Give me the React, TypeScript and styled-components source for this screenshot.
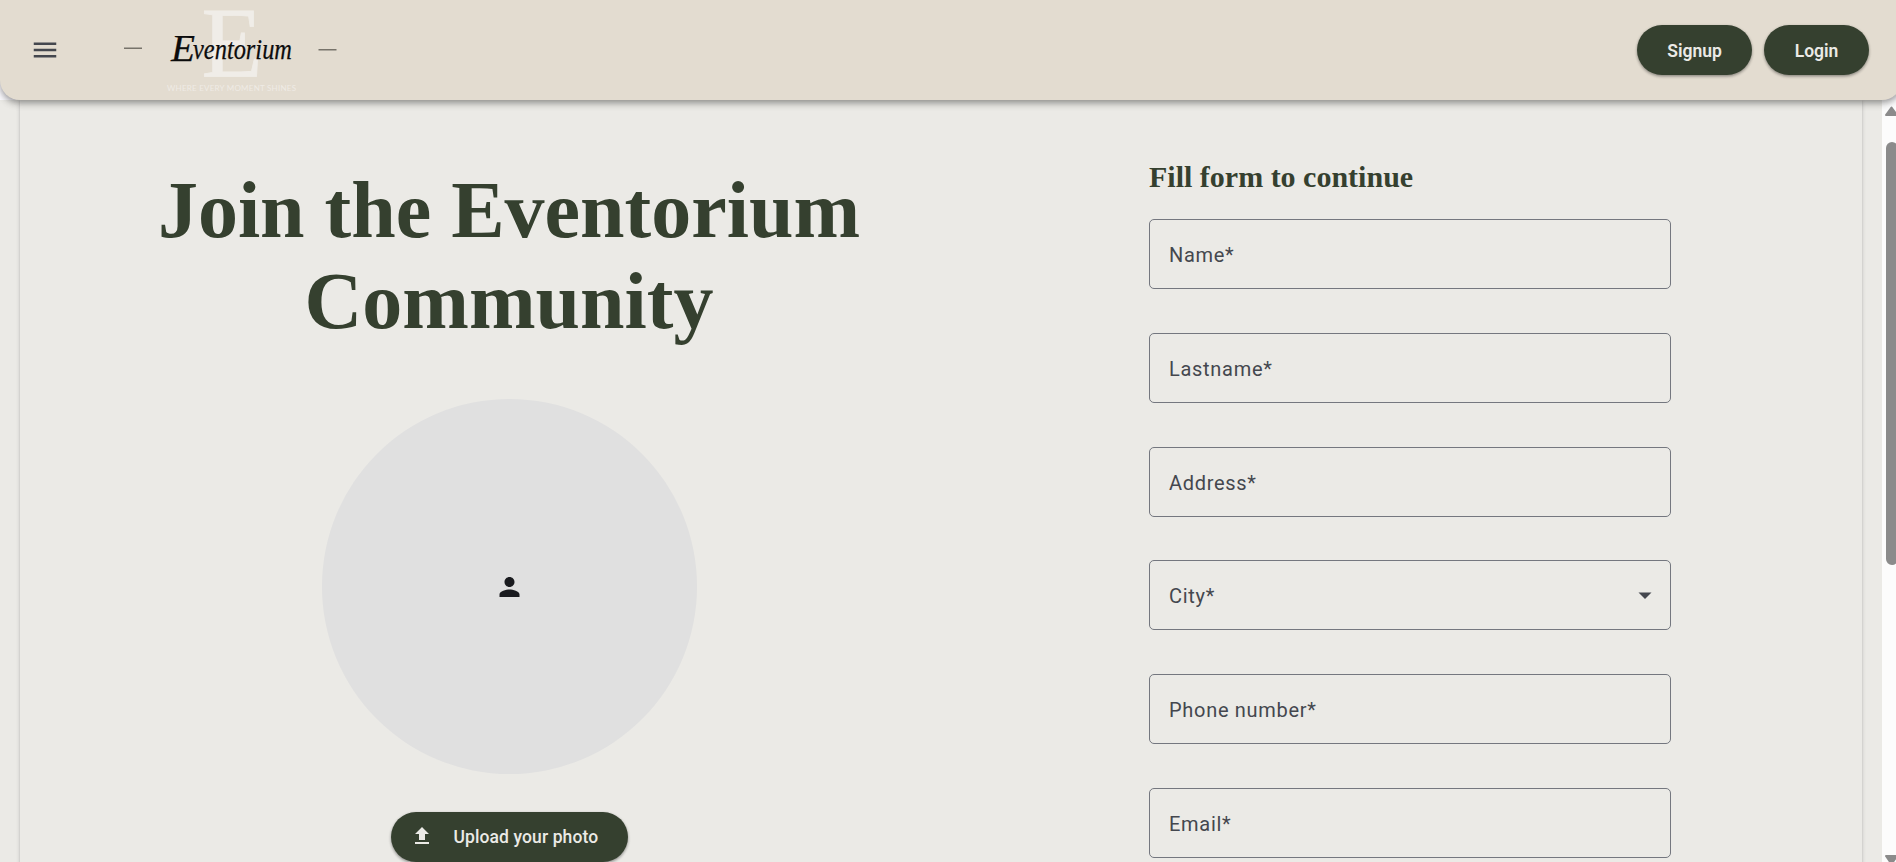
import React from "react";
import styled, { createGlobalStyle } from "styled-components";

const green = "#35402f";
const cream = "#e3dcd0";
const paper = "#ebeae6";

const GlobalStyle = createGlobalStyle`
  * { box-sizing: border-box; }
  html, body { margin: 0; height: 862px; overflow: hidden; background: #faf9fd; }
`;

const Page = styled.div`
  display: flex;
  flex-direction: column;
  height: 862px;
  overflow: hidden;
  font-family: Roboto, "Liberation Sans", sans-serif;
`;

const Header = styled.header`
  position: relative;
  z-index: 2;
  flex: none;
  display: flex;
  align-items: center;
  width: 1902px;
  height: 100px;
  padding: 0 33px 0 30px;
  background: ${cream};
  border-radius: 0 0 20px 20px;
  box-shadow: 0 2.5px 5px -1px rgba(0, 0, 0, 0.2), 0 5px 6px rgba(0, 0, 0, 0.14),
    0 1px 12px rgba(0, 0, 0, 0.12);
`;

const MenuButton = styled.button`
  display: flex;
  width: 30px;
  height: 30px;
  padding: 0;
  border: 0;
  background: none;
  color: #44474e;
`;

const Logo = styled.svg`
  margin-left: 60px;
  width: 220px;
  height: 100px;
  overflow: visible;
`;

const Actions = styled.nav`
  display: flex;
  gap: 12px;
  margin-left: auto;
`;

const PillButton = styled.button<{ $width: number }>`
  display: flex;
  align-items: center;
  justify-content: center;
  width: ${(p) => p.$width}px;
  height: 50px;
  padding: 2px 0 0;
  border: 0;
  border-radius: 25px;
  background: ${green};
  color: ${paper};
  font: 600 17.5px/25px Roboto, "Liberation Sans", sans-serif;
  white-space: nowrap;
  box-shadow: 0 1px 3px rgba(0, 0, 0, 0.3), 0 2px 3px rgba(0, 0, 0, 0.14);
`;

const UploadButton = styled(PillButton)`
  justify-content: flex-start;
  padding: 1px 0 0 19px;
  font-weight: 500;
  letter-spacing: 0.1px;
`;

const UploadIcon = styled.svg`
  margin: 0 20px 3px 0;
`;

const Body = styled.div`
  display: flex;
  flex: 1;
  width: 1902px;
  min-height: 0;
`;

const Scroller = styled.main`
  flex: none;
  width: 1882px;
  padding: 0 20px;
  background: ${paper};
`;

const Card = styled.section`
  display: flex;
  width: 1842px;
  height: 1100px;
  background: ${paper};
  box-shadow: 0 2.5px 1px -1px rgba(0, 0, 0, 0.12), 0 1px 1px rgba(0, 0, 0, 0.14),
    0 1px 4px rgba(0, 0, 0, 0.18);
`;

const Intro = styled.div`
  display: flex;
  flex-direction: column;
  align-items: center;
  width: 978px;
  padding-top: 65px;
`;

const Title = styled.h1`
  margin: 0;
  width: 720px;
  color: ${green};
  font: 700 80px/91px "Liberation Serif", serif;
  text-align: center;
`;

const Avatar = styled.div`
  display: flex;
  align-items: center;
  justify-content: center;
  width: 375px;
  height: 375px;
  margin: 52px 0 38px;
  border-radius: 50%;
  background: #e0e0e0;
  color: #1a1b1f;
`;

const Form = styled.form`
  display: flex;
  flex-direction: column;
  width: 522px;
  margin-left: 151px;
  padding-top: 60px;
`;

const FormTitle = styled.h2`
  margin: 0 0 25px;
  color: ${green};
  font: 700 30px/34px "Liberation Serif", serif;
`;

const Field = styled.label`
  display: flex;
  align-items: center;
  justify-content: space-between;
  flex: none;
  height: 70px;
  margin-bottom: 43.8px;
  padding: 2px 13px 0 19px;
  border: 1px solid #74777f;
  border-radius: 5px;
  color: #44474e;
  font-size: 20px;
  line-height: 30px;
  letter-spacing: 0.7px;
`;

const Scrollbar = styled.aside`
  display: flex;
  flex-direction: column;
  align-items: flex-start;
  width: 20px;
  padding: 6px 0 0 3px;
  background: #fcfcfc;
`;

const Thumb = styled.div`
  flex: none;
  width: 12px;
  height: 423px;
  border-radius: 6px;
  background: #8b8b8b;
  margin: 26px 0 auto 1px;
`;

const fields = ["Name", "Lastname", "Address", "City", "Phone number", "Email"];

export default function App() {
  return (
    <Page>
      <GlobalStyle />
      <Header>
        <MenuButton aria-label="Menu">
          <svg width="30" height="30" viewBox="0 0 24 24" fill="currentColor">
            <path d="M3 18h18v-2H3v2zm0-5h18v-2H3v2zm0-7v2h18V6H3z" />
          </svg>
        </MenuButton>
        <Logo viewBox="120 0 220 100">
          <text
            x="201.5"
            y="76"
            fontFamily="Liberation Serif"
            fontSize="100"
            textLength="61"
            lengthAdjust="spacingAndGlyphs"
            fill="#f0ede8"
            stroke="#f0ede8"
            strokeWidth="0.8"
          >
            E
          </text>
          <text fontFamily="Liberation Serif" fontStyle="italic" fill="#0c0c0c" stroke="#0c0c0c" strokeWidth="0.25">
            <tspan x="171" y="60.5" fontSize="38" textLength="24" lengthAdjust="spacingAndGlyphs">E</tspan>
            <tspan x="193" y="59" fontSize="29.5" textLength="99" lengthAdjust="spacingAndGlyphs">
              ventorium
            </tspan>
          </text>
          <text x="167" y="90.500" fontFamily="Lato" fontSize="8" textLength="129" fill="#efebe5">
            WHERE EVERY MOMENT SHINES
          </text>
          <path d="M124 48.300h18M318.500 49.700h18" stroke="#77736a" strokeWidth="1.400" />
        </Logo>
        <Actions>
          <PillButton $width={115}>Signup</PillButton>
          <PillButton $width={105}>Login</PillButton>
        </Actions>
      </Header>
      <Body>
        <Scroller>
          <Card>
            <Intro>
              <Title>Join the Eventorium Community</Title>
              <Avatar>
                <svg width="31" height="30" viewBox="0 0 24 24" fill="currentColor">
                  <path d="M12 12c2.210 0 4-1.790 4-4s-1.790-4-4-4-4 1.790-4 4 1.790 4 4 4zm0 2c-2.670 0-8 1.340-8 4v2h16v-2c0-2.660-5.330-4-8-4z" />
                </svg>
              </Avatar>
              <UploadButton $width={237}>
                <UploadIcon width="24" height="24" viewBox="0 0 24 24" fill="currentColor">
                  <path d="M5 20h14v-2H5v2zm0-10h4v6h6v-6h4l-7-7-7 7z" />
                </UploadIcon>
                Upload your photo
              </UploadButton>
            </Intro>
            <Form>
              <FormTitle>Fill form to continue</FormTitle>
              {fields.map((f) => (
                <Field key={f}>
                  {f}*
                  {f === "City" && (
                    <svg width="24" height="24" viewBox="0 0 24 24" fill="currentColor">
                      <path d="M5.500 8.500h13L12 15z" />
                    </svg>
                  )}
                </Field>
              ))}
            </Form>
          </Card>
        </Scroller>
        <Scrollbar>
          <svg width="13" height="10" viewBox="0 0 13 10" fill="#8b8b8b" stroke="#8b8b8b" strokeWidth="2" strokeLinejoin="round">
            <path d="M6.500 1.500L12 9H1z" />
          </svg>
          <Thumb />
          <svg width="13" height="7" viewBox="0 0 13 7" fill="#8b8b8b" stroke="#8b8b8b" strokeWidth="2" strokeLinejoin="round">
            <path d="M1 1h11L6.500 9z" />
          </svg>
        </Scrollbar>
      </Body>
    </Page>
  );
}
